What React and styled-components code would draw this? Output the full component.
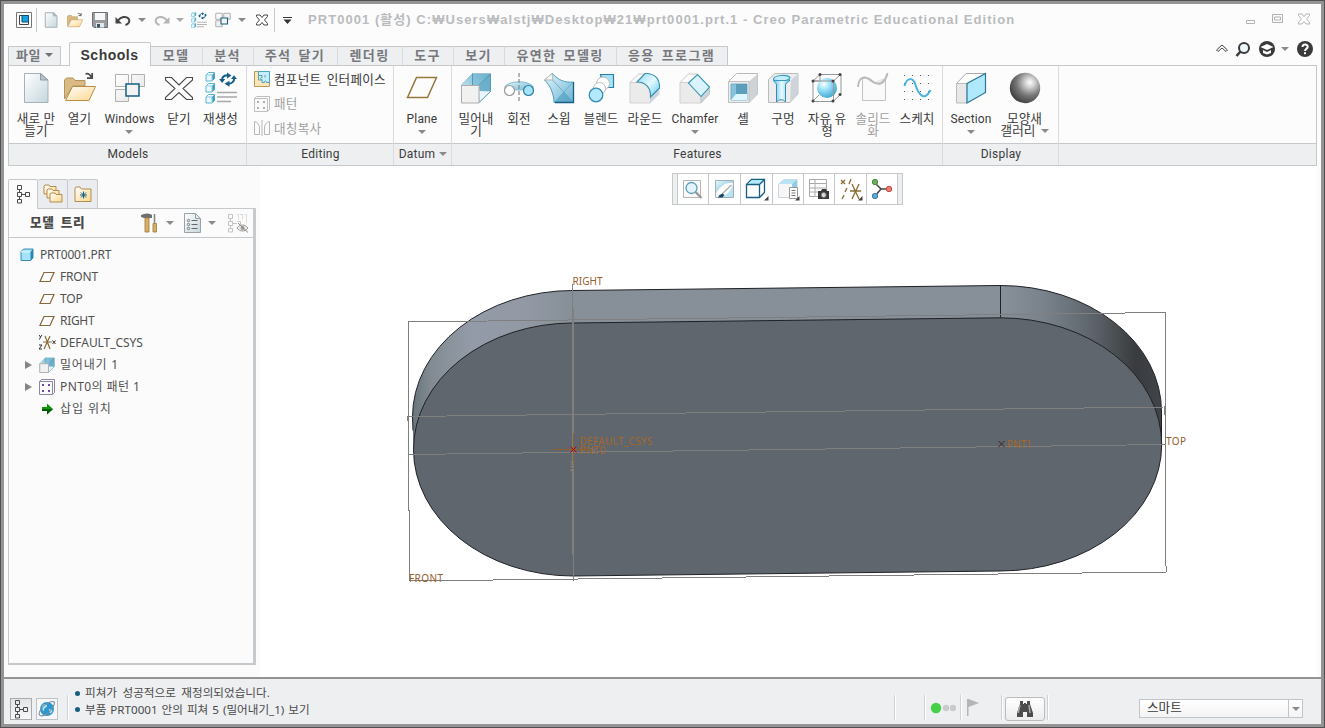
import React from "react";
import styled, { createGlobalStyle } from "styled-components";

const GlobalStyle = createGlobalStyle`
  * { box-sizing: border-box; }
  body { margin: 0; background: #fff; overflow: hidden; }
`;

const uiFont = `Roboto, "Noto Sans CJK KR", sans-serif`;
const treeFont = `"Noto Sans", "Noto Sans CJK KR", sans-serif`;
const line = "#c6c9cc";

/* ---------- window ---------- */
const Window = styled.div`
  width: 1325px;
  height: 728px;
  background: #959494;
  border: 1px solid #525051;
  padding: 3px;
  display: flex;
  flex-direction: column;
  font-family: ${uiFont};
  font-size: 12px;
  color: #3a3a3a;
  white-space: nowrap;
`;
const TitleBar = styled.header`
  height: 38px;
  background: #fcfcfc;
  display: flex;
  align-items: flex-start;
  padding: 4px 11px 0 0;
`;
const Slot = styled.span`
  height: 24px;
  width: ${(p) => p.$w || 16}px;
  margin-left: ${(p) => p.$ml || 0}px;
  display: flex;
  align-items: center;
  justify-content: center;
  flex: none;
`;
const VLine = styled.span`
  width: 1px;
  height: ${(p) => p.$h || 24}px;
  margin-left: ${(p) => p.$ml || 0}px;
  background: #c6c9cc;
  flex: none;
`;
const Title = styled.h1`
  margin: 0 0 0 16px;
  font: 700 13px/23px "Liberation Sans", "Noto Sans CJK KR", sans-serif;
  letter-spacing: 1.05px;
  color: #b9bbbd;
  flex: 1;
`;
const Caret = styled.i`
  width: 0;
  height: 0;
  flex: none;
  border: solid transparent;
  border-width: 4px 4px 0;
  border-top-color: ${(p) => p.$c || "#8a8a8a"};
`;
const WinButtons = styled.div`
  display: flex;
  gap: 11px;
  padding-top: 5px;
`;

/* ---------- ribbon ---------- */
const TabRow = styled.nav`
  height: 23px;
  background: #fcfcfc;
  display: flex;
  align-items: flex-end;
  padding-left: 4px;
  font-family: "Noto Sans CJK KR", sans-serif;
`;
const FileTab = styled.div`
  width: 53px;
  height: 19px;
  margin-right: 8px;
  padding-bottom: 2px;
  background: #edeff1;
  border: 1px solid ${line};
  border-bottom: 0;
  display: flex;
  align-items: center;
  justify-content: center;
  gap: 4px;
  font-weight: 700;
  font-size: 13px;
  letter-spacing: 0.5px;
  line-height: 16px;
  color: #76787c;
`;
const ActiveTab = styled.div`
  width: 82px;
  height: 24px;
  margin-bottom: -1px;
  padding-right: 1px;
  position: relative;
  background: #fcfcfc;
  border: 1px solid ${line};
  border-bottom: 0;
  border-radius: 2px 2px 0 0;
  text-align: center;
  font: 700 14px/25px "Liberation Sans", sans-serif;
  letter-spacing: 0.5px;
  color: #3a3a3a;
`;
const Tab = styled.div`
  width: ${(p) => p.$w}px;
  height: 19px;
  padding-right: 1px;
  background: #edeff1;
  border-top: 1px solid ${line};
  border-right: 1px solid #d8dadc;
  text-align: center;
  font-weight: 700;
  font-size: 13px;
  line-height: 16px;
  letter-spacing: 1.3px;
  word-spacing: 3px;
  color: #76787c;
  &:nth-last-child(2) { border-right-color: ${line}; }
`;
const TabTools = styled.div`
  margin-left: auto;
  display: flex;
  align-items: center;
  height: 20px;
  padding: 0 8px 3px 0;
  margin-bottom: 5px;
`;
const RibbonWrap = styled.div`
  background: #fcfcfc;
  padding: 0 4px 0 4px;
`;
const Ribbon = styled.section`
  height: 101px;
  border: 1px solid ${line};
  display: flex;
`;
const Group = styled.div`
  width: ${(p) => p.$w}px;
  flex: ${(p) => (p.$w ? "none" : 1)};
  display: flex;
  flex-direction: column;
  border-right: ${(p) => (p.$w ? `1px solid #d9dbdd` : 0)};
`;
const GroupBody = styled.div`
  height: 77px;
  display: flex;
`;
const GroupName = styled.div`
  height: 22px;
  background: #edeff1;
  border-top: 1px solid ${line};
  padding: 0 0 2px 1px;
  display: flex;
  gap: 4px;
  align-items: center;
  justify-content: center;
  font-size: 12px;
  letter-spacing: 0.25px;
  color: #3c3c3c;
`;
const Tool = styled.div`
  width: ${(p) => p.$w}px;
  flex: none;
  padding-top: 6px;
  display: flex;
  flex-direction: column;
  align-items: center;
  color: ${(p) => (p.$off ? "#a0a0a0" : "#3a3a3a")};
`;
const ToolText = styled.span`
  margin-top: 9px;
  display: flex;
  flex-direction: column;
  align-items: center;
  font-size: ${(p) => (p.$latin ? 12 : 12.6)}px;
  line-height: 12px;
  letter-spacing: ${(p) => (p.$latin ? 0.15 : 0.1)}px;
  & > i { margin-top: 5px; }
  & > span { display: flex; align-items: center; gap: 5px; }
`;
const EditList = styled.div`
  padding: 1px 0 0 7px;
`;
const EditRow = styled.div`
  height: 24.5px;
  display: flex;
  align-items: center;
  gap: 4px;
  font-size: 12.6px;
  line-height: 16px;
  word-spacing: 2px;
  letter-spacing: 0.25px;
  color: ${(p) => (p.$off ? "#a0a0a0" : "#3a3a3a")};
  & > span { margin-top: 1px; }
`;

/* ---------- work area ---------- */
const Work = styled.main`
  flex: 1;
  display: flex;
  background: #fbfbfb;
  min-height: 0;
`;
const Side = styled.aside`
  width: 256px;
  padding: 13px 4px 12px 4px;
  display: flex;
  flex-direction: column;
`;
const SideTabs = styled.div`
  display: flex;
  height: 29px;
`;
const SideTab = styled.div`
  width: 30px;
  height: ${(p) => (p.$on ? 30 : 29)}px;
  position: relative;
  display: flex;
  align-items: center;
  justify-content: center;
  padding-bottom: ${(p) => (p.$on ? 2 : 0)}px;
  background: ${(p) => (p.$on ? "#fbfbfb" : "#eaecef")};
  border: 1px solid ${line};
  border-bottom: 0;
  border-left-width: ${(p) => (p.$on ? 1 : 0)}px;
  border-radius: 2px 2px 0 0;
`;
const Tree = styled.div`
  flex: 1;
  border: 1px solid ${line};
  border-right: 3px solid #c6cacd;
  border-bottom: 2px solid #c6cacd;
`;
const TreeHead = styled.div`
  height: 29px;
  border-bottom: 1px solid ${line};
  display: flex;
  align-items: center;
  padding-left: 21px;
  font: 700 12.6px/24px "Noto Sans CJK KR", sans-serif;
  color: #4a4a4a;
  & > b {
    width: 109px;
    margin-top: -3px;
    letter-spacing: 0.6px;
    word-spacing: 3px;
  }
`;
const TreeRows = styled.div`
  padding-top: 6px;
  font-family: ${treeFont};
`;
const TreeRow = styled.div`
  height: 22px;
  display: flex;
  align-items: center;
  padding: 0 0 1px ${(p) => (p.$root ? 11 : 16)}px;
  gap: ${(p) => (p.$root ? 6 : 0)}px;
  font-size: 12px;
  line-height: 20px;
  letter-spacing: ${(p) => p.$ls || 0}px;
  color: #505050;
  & > svg { margin-right: ${(p) => (p.$root ? 0 : p.$mr || 5)}px; flex: none; }
`;
const Expander = styled.i`
  width: 14px;
  flex: none;
  &::before {
    content: "";
    display: block;
    width: 0;
    border: solid transparent;
    border-width: 4.5px 0 4.5px 7px;
    border-left-color: ${(p) => (p.$show ? "#858585" : "transparent")};
  }
`;
const Canvas = styled.div`
  width: 1057px;
  background: #fff;
  position: relative;
  & > svg { display: block; }
`;
const ViewBar = styled.div`
  position: absolute;
  left: 412px;
  top: 7px;
  height: 32px;
  display: flex;
  border: 1px solid ${line};
  background: #fff;
`;
const Grip = styled.span`
  width: 4px;
  background: #edeff1;
`;
const ViewCell = styled.span`
  width: ${(p) => p.$w}px;
  display: flex;
  align-items: center;
  justify-content: center;
  border-left: 1px solid ${line};
  &:nth-last-child(2) { border-right: 1px solid ${line}; }
`;

/* ---------- status ---------- */
const Status = styled.footer`
  height: 47px;
  background: #edeff1;
  border-top: 2px solid #959494;
  display: flex;
  align-items: flex-start;
  padding-left: 6px;
`;
const StatusButton = styled.span`
  width: 22px;
  height: 22px;
  margin: 19px 4px 0 0;
  display: flex;
  align-items: center;
  justify-content: center;
  background: ${(p) => (p.$on ? "linear-gradient(#e2e4e7,#f8f8f8)" : "#f6f7f8")};
  border: 1px solid ${(p) => (p.$on ? "#a9acaf" : "#c0c3c6")};
`;
const Messages = styled.ul`
  list-style: none;
  margin: 6px 0 0 6px;
  padding: 0;
  width: 819px;
  font-family: ${treeFont};
  font-size: 11.6px;
  line-height: 16.5px;
  color: #4a4a4a;
`;
const Message = styled.li`
  display: flex;
  align-items: center;
  gap: 5px;
  letter-spacing: 0;
  word-spacing: ${(p) => p.$ws}px;
  &::before {
    content: "";
    width: 5px;
    height: 5px;
    border-radius: 3px;
    background: #156082;
  }
`;
const StatusRule = styled.span`
  width: 2px;
  height: 25px;
  margin: 16px 0 0 ${(p) => p.$ml || 0}px;
  background: linear-gradient(90deg, #cfd2d5 50%, #fff 50%);
  flex: none;
`;
const StatusIcon = styled.span`
  width: ${(p) => p.$w}px;
  height: 25px;
  margin-top: 16px;
  display: flex;
  align-items: center;
  padding-left: ${(p) => p.$pl}px;
`;
const FindButton = styled.span`
  width: 40px;
  height: 24px;
  margin: 18px 0 0 2px;
  border: 1px solid #bbb;
  border-radius: 3px;
  background: linear-gradient(#fff, #ececec);
  display: flex;
  align-items: center;
  justify-content: center;
`;
const Select = styled.div`
  width: 164px;
  height: 19px;
  margin: 20px 0 0 90px;
  border: 1px solid #c2c5c8;
  background: linear-gradient(#fff, #f4f4f4);
  display: flex;
  font-size: 12.6px;
  line-height: 16px;
  padding-left: 7px;
  color: #3a3a3a;
`;
const SelectArrow = styled.span`
  margin-left: auto;
  width: 14px;
  border-left: 1px solid #c2c5c8;
  display: flex;
  align-items: center;
  justify-content: center;
`;

/* ---------- icons ---------- */
const Svg = ({ s = 32, w, h, v, children }) => (
  <svg width={w || s} height={h || s} viewBox={v || "0 0 32 32"} fill="none">{children}</svg>
);

const Defs = () => (
  <svg width="0" height="0" style={{ display: "block" }}>
    <defs>
      <linearGradient id="paper" x1="0" y1="0" x2="1" y2="1"><stop stopColor="#fff" /><stop offset="1" stopColor="#c5d6de" /></linearGradient>
      <linearGradient id="fold" x1="0" y1="0" x2="1" y2="1"><stop stopColor="#fff" /><stop offset="1" stopColor="#fcd78a" /></linearGradient>
      <linearGradient id="sky" x1="0" y1="0" x2="1" y2="1"><stop stopColor="#e3f6fd" /><stop offset="1" stopColor="#6bb3d2" /></linearGradient>
      <linearGradient id="arch" x1="0" y1="0" x2="1" y2="1"><stop stopColor="#8fdcfa" /><stop offset=".5" stopColor="#e3f8ff" /><stop offset="1" stopColor="#5fcdf6" /></linearGradient>
      <linearGradient id="skyr" x1="0" y1="1" x2="1" y2="0"><stop stopColor="#dff5fd" /><stop offset="1" stopColor="#62abc9" /></linearGradient>
      <linearGradient id="tile" x1="0" y1="0" x2="1" y2="1"><stop stopColor="#fff" /><stop offset="1" stopColor="#e2e2e2" /></linearGradient>
      <linearGradient id="tube" x1="0" x2="1"><stop stopColor="#5cc3ee" /><stop offset=".5" stopColor="#e8faff" /><stop offset="1" stopColor="#6fcaf0" /></linearGradient>
      <radialGradient id="ball" cx=".35" cy=".3" r=".75"><stop stopColor="#fff" /><stop offset=".4" stopColor="#9be0f8" /><stop offset="1" stopColor="#3ba6cf" /></radialGradient>
      <radialGradient id="dark" cx=".66" cy=".32" r=".72"><stop stopColor="#fff" /><stop offset=".2" stopColor="#d6d6d6" /><stop offset=".6" stopColor="#787878" /><stop offset="1" stopColor="#414141" /></radialGradient>
    </defs>
  </svg>
);

const NewDoc = ({ s }) => (
  <Svg s={s}><path d="M4.500 1.500H21L28 8.500V30.500H4.500Z" fill="url(#paper)" stroke="#a8b1b5" strokeWidth={s === 16 ? 2 : 1} /><path d="M20.500 1.500V8H28Z" fill="#b5c4cc" stroke="#8f9ca3" /></Svg>
);
const Open = ({ s }) => (
  <Svg s={s}>
    <path d="M.5 27V8L2.500 6H9L11 8.500H21V14H9Z" fill="#d8ba82" stroke="#b3935a" />
    <path d="M1.500 28.500 8.500 14.500H31.500L25 28.500Z" fill="url(#fold)" stroke="#b98d47" />
    <path d="M21.500 2C24.500 1 26.500 3 27 5M23 6.200H28.200V1" stroke="#4a4a4a" strokeWidth="1.700" />
  </Svg>
);
const Save = () => (
  <Svg s={16} v="0 0 16 16"><path d="M.5.5h15v15H2l-1.500-1.500Z" fill="#989c9f" stroke="#6d7174" /><path d="M3 1h10v7H3Z" fill="#f5f7f8" /><path d="M4 11h8v4.500H4Z" fill="#e3e7ea" /><path d="M5 12h3v3.500H5Z" fill="#3c5565" /></Svg>
);
const Undo = ({ c = "#454545", flip }) => (
  <Svg s={16} v="0 0 16 16"><g transform={flip ? "matrix(-1 0 0 1 16 0)" : undefined}><path d="M3 8.500C6 4.500 11 4 13.500 6.500c2 3 0 5.500-3 6.500" stroke={c} strokeWidth="2" /><path d="M.5 5v6.500h6.500Z" fill={c} /></g></Svg>
);
const miniCube = (x, y) => (
  <g key={y}><path d={`M${x} ${y + 2.500}l2.500-2.500h6v6l-2.500 2.500h-6Z`} fill="#e8f8fe" stroke="#5fb3d2" /><path d={`M${x + 6} ${y + 2.500}l2.500-2.500v6l-2.500 2.500Z`} fill="#3f97bb" /><path d={`M${x} ${y + 2.500}h6v6`} stroke="#8fd0e8" /></g>
);
const Regen = ({ s }) => (
  <Svg s={s}>
    {[0.5, 11.500, 22.500].map((y) => miniCube(1, y))}
    <path d="M17 8c0-3.500 3-4.800 6-4.800M29 6c.5 3.500-2 5.500-5.500 5.800" stroke="#156082" strokeWidth="2" />
    <path d="M22 .5l4.500 3-4.500 3ZM24.500 8.800v6l-5-3ZM14 7h6.200l-3 4ZM26 7h6L29 3.200Z" fill="#156082" />
    <path d="M12 20.500h20M12 25h20M12 29.500h14" stroke="#a8a8a8" strokeWidth="1.700" />
  </Svg>
);
const Windows = ({ s }) => (
  <Svg s={s}>
    <path d="M1.500 2.500h13v12h-13ZM17.500 2.500h13v12h-13ZM1.500 17.500h13v12h-13Z" fill="url(#tile)" stroke="#b0b0b0" strokeWidth={s === 16 ? 2 : 1} />
    <path d="M12 12h13v12H12Z" fill="#f3f3f3" stroke="#156082" strokeWidth={s === 16 ? 2.200 : 1.500} />
  </Svg>
);
const Cross = ({ s, c = "#4a4a4a", sw = 1.100 }) => (
  <Svg s={s}><path d="M2.500 5.500H8.500l7.500 7.500L23.500 5.500h6V8L20 16.500l9.500 9V27.500h-6L16 20.500 8.500 27.500h-6V25.500L12 16.500 2.500 8Z" fill="#fff" stroke={c} strokeWidth={sw} /></Svg>
);
const CrossMini = ({ c }) => (
  <Svg s={12} v="0 0 12 12"><path d="M.5 1H4l2 2.500L8 1h3.500v1.500L8.500 6l3 3.500V11H8L6 8.500 4 11H.5V9.500l3-3.500-3-3.500Z" stroke={c} /></Svg>
);
const AppIcon = () => (
  <Svg s={16} v="0 0 16 16"><path d="M.5.5h15v15H.5Z" fill="#fff" stroke="#777" /><path d="M3.500 3.500h9v9h-9Z" fill="#f5f5f5" stroke="#444" /><path d="M6 3.500h6.500V10H6Z" fill="#17a0e0" stroke="#0b4d75" /></Svg>
);
const CompIcon = () => (
  <Svg s={16} v="0 0 16 16"><path d="M.5.5h15v15H.5Z" fill="#fce6b6" stroke="#b8985c" /><path d="M4.500.5h11v11h-3c.5-2-2.500-2-2 0H8V8.500C6 9 6 6 8 6.500V4.500H4.500Z" fill="#c8ecfa" stroke="#4ba3c7" /><path d="M4.500 1v8h3M11 4v2.500" stroke="#4ba3c7" /></Svg>
);
const PatternIcon = ({ c = "#c0c0c0", d = "#b0b0b0" }) => (
  <Svg s={16} v="0 0 16 16"><path d="M.5 2.500h13v13H.5Z" fill="#fafafa" stroke={c} /><path d="M.5 2.500l2-2h13v13l-2 2" stroke={c} /><path d="M3 5h2v2H3ZM9 5h2v2H9ZM3 11h2v2H3ZM9 11h2v2H9Z" fill={d} /></Svg>
);
const MirrorIcon = () => (
  <Svg s={16} v="0 0 16 16"><path d="M.5 1.500v13h5V7C5 4 3 2 .5 1.500ZM15.500 1.500v13h-5V7c.5-3 2.500-5 5-5.500ZM8 0v16" stroke="#b8b8b8" /></Svg>
);
const Plane = () => (
  <Svg><path d="M10.500 5.500H30.500L21.500 25.500H1.500Z" stroke="#96773a" strokeWidth="1.500" /></Svg>
);
const Extrude = ({ s }) => (
  <Svg s={s}>
    <path d="M1.500 13 12.500 1.500h18V19L19 30.500H1.500Z" fill="url(#skyr)" stroke="#9cc3d3" />
    <path d="M12.500 2H30V19H12.500Z" fill="#76b8d4" opacity=".45" />
    <path d="M20 13 30 2.500V19H20Z" fill="#5fa6c4" opacity=".6" />
    <path d="M20 30 30 19.500 19 19Z" fill="#e9f7fc" />
    <path d="M12.500 1.500V13M30.500 2 19 13M30.500 2V19.500L19 30.500" stroke="#4d94b2" strokeWidth=".9" />
    <path d="M1.500 13.500H19V31H1.500Z" fill="#f1f1f1" stroke="#adadad" strokeWidth={s === 16 ? 1.800 : 1} />
  </Svg>
);
const Revolve = () => (
  <Svg><path d="M1.500 15C6 8 26 8 30.500 15L26 19C24 17 20 18 16 18S8 17 6 19Z" fill="url(#sky)" stroke="#8bbcd0" /><circle cx="6.500" cy="18.500" r="5" fill="#fff" stroke="#999" strokeWidth="1.200" /><circle cx="25.500" cy="18.500" r="5" fill="#a6e4fb" stroke="#2a7fa3" strokeWidth="1.200" /><path d="M16 1V31" stroke="#909090" strokeWidth="1.300" strokeDasharray="4 2" /></Svg>
);
const Sweep = () => (
  <Svg><path d="M1.500 8 9.500 1.500C15 8 22 11 30.500 10V30.500H11C11 22 7 13 1.500 8Z" fill="url(#sky)" stroke="#4b9ec0" /><path d="M9.500 8 30 30M29 11 12 30" stroke="#5aa8c8" strokeWidth=".8" /><path d="M21 20 30 30H12Z" fill="#4d9dbf" opacity=".6" /><path d="M1.500 8 9 1.500 10 8Z" fill="#f7f7f7" stroke="#b5b5b5" /><path d="M12 30.500h18.500V10" stroke="#156082" strokeWidth="1.300" /></Svg>
);
const Blend = () => (
  <Svg><path d="M15.500 2.500h13v13h-10Z" fill="#a5e3fa" stroke="#2a7fa3" strokeWidth="1.200" /><circle cx="18" cy="11.500" r="6.500" fill="#fff" stroke="#bbb" /><circle cx="14.500" cy="16.500" r="6" fill="#fff" stroke="#bbb" /><circle cx="11" cy="23" r="6.800" fill="#b2e9fd" stroke="#3a8cae" strokeWidth="1.300" /></Svg>
);
const Round = () => (
  <Svg><path d="M1 10.500H9C17 11 21.500 16 21.500 24V31H1Z" fill="#ebebeb" stroke="#d2d2d2" /><path d="M21.500 25 30.500 15v7l-9 9Z" fill="#ccd4dc" /><path d="M1 10.500 9.500 2H16" stroke="#c8c8c8" /><path d="M8 10 16 1.500C25 1 31 6 30.500 16L21.500 25C22 16 17 10 8 10Z" fill="url(#arch)" stroke="#3a8cae" strokeWidth="1.100" /></Svg>
);
const Chamfer = () => (
  <Svg><path d="M1 10.500H9.500L22 24V31H1Z" fill="#ebebeb" stroke="#d2d2d2" /><path d="M22 24.500 30.500 15.500v6.500l-8.500 9Z" fill="#ccd4dc" stroke="#c0c6cc" /><path d="M1 10.500 9.500 2h9" stroke="#c8c8c8" /><path d="M9.500 11 18.500 2.500 30.500 15 22 24.500Z" fill="#d9f4fd" stroke="#3a93b5" strokeWidth="1.100" /></Svg>
);
const Shell = () => (
  <Svg><path d="M1.500 9.500 9.500 1.500h21V22L22 30.500H1.500Z" fill="#fafafa" stroke="#b8b8b8" /><path d="M22 9.500 30.500 2V22L22 30.500Z" fill="#cfd3d6" /><path d="M1.500 9.500H22v21H1.500Z" fill="#ececec" stroke="#c0c0c0" /><path d="M4 12h16v16H4Z" fill="#86c3dc" stroke="#5aa8c8" strokeWidth=".8" /><path d="M4 28l5-6h11v6Z" fill="#def6ff" /><path d="M9 12h11v10H9Z" fill="#4f93b0" opacity=".75" /></Svg>
);
const Hole = () => (
  <Svg><path d="M1.500 7.500 8 1.500h23V22L23 30.500H1.500Z" fill="#ededed" stroke="#bbb" /><path d="M24 8 31 2V22l-8 8.500Z" fill="#cdd4da" /><path d="M6.500 7C7 12 9.500 10 9.500 13V30c2-3 7-3 9 0V13c0-3 3-2 4.500-5Z" fill="url(#tube)" stroke="#3a8cae" /><path d="M6.500 8C6 3 20 2 23 5.500c-1 3-3 2-4 3H10C9 8 8 9 6.500 8Z" fill="#c3eefc" stroke="#3a9cc0" strokeWidth="1.100" /></Svg>
);
const Free = () => (
  <Svg><path d="M2 9h20.500v20.500H2ZM9 2.500h21v20M9 2.500v6M2 9l7-6.500M22.500 9l7-6.500M22.500 29l7-6.500M2 29l6-6" stroke="#959595" /><circle cx="16" cy="16" r="10" fill="url(#ball)" /><path d="M2 9H22.500V29" stroke="#999" />{[[2, 9], [22, 9], [2, 29], [22, 29], [9, 2.500], [29, 2.500], [29, 22.500]].map(([x, y]) => <circle key={x + "-" + y} cx={x} cy={y} r="1.500" fill="#444" />)}</Svg>
);
const Solidify = () => (
  <Svg><path d="M5.500 7V28.500h23V7C24 8 24 12 18 11S10 4 5.500 7Z" fill="#fafafa" stroke="#c3c3c3" /><path d="M17 11 28.500 6V3" stroke="#ddd" /><path d="M1 15C2 3 9 4 15 9s13 4 15.500-8" stroke="#b8b8b8" strokeWidth="1.800" /></Svg>
);
const Sketch = () => (
  <Svg>{[3, 11, 19, 27].map((y) => [3, 11, 19, 27].map((x) => <rect key={x + "-" + y} x={x} y={y} width="1" height="1" fill="#555" />))}<path d="M3.500 14C6 5 12 5 14.500 13S23 31 29.500 18" stroke="#46b4de" strokeWidth="2" /></Svg>
);
const Section = () => (
  <Svg><path d="M1.500 11.500 11 1.500H31L12 11.500Z" fill="#fff" stroke="#aaa" /><path d="M1.500 11.500H12V31H1.500Z" fill="#e8e8e8" stroke="#bbb" /><path d="M12 11.500 30.500 1.500V20.500L12 31Z" fill="#aee9fd" stroke="#2c7797" strokeWidth="1.200" /></Svg>
);
const Sphere = () => <Svg><circle cx="16" cy="16" r="15.200" fill="url(#dark)" /></Svg>;

const TreeGlyph = () => (
  <Svg w={14} h={20} v="0 0 14 20"><path d="M1.500 1.500h4v4h-4ZM1.500 8.500h4v4h-4ZM1.500 15.500h4v3.500h-4ZM9.500 8.500h4v4h-4ZM3.500 5.500v3M3.500 12.500v3M5.500 10.500h4" stroke="#4a4a4a" /></Svg>
);
const folder = (x, y) => <path key={x} d={`M${x} ${y + 9}V${y + 1}l1-1h4l1 1.500h6V${y + 9}Z`} fill="url(#fold)" stroke="#b08d50" />;
const Folders = () => <Svg s={20} v="0 0 20 20">{folder(1, 1)}{folder(4, 5)}{folder(7, 9)}</Svg>;
const FavFolder = () => (
  <Svg w={18} h={16} v="0 0 18 16"><path d="M1 15.500V2l1-1h4l1.500 2H17v12.500Z" fill="url(#fold)" stroke="#b08d50" /><path d="M9.500 5.500v7M6 9h7M7 6.500l5 5M12 6.500l-5 5" stroke="#156082" /></Svg>
);
const Hammer = () => (
  <Svg w={18} h={20} v="0 0 18 20"><path d="M1 2C5 0 9 0 12 2V5H4L1 4Z" fill="#707070" /><path d="M5 5h4v14H5Z" fill="#d9ae66" stroke="#9c763c" strokeWidth=".8" /><path d="M14.500 1v9" stroke="#888" strokeWidth="1.600" /><path d="M13 10.500h3.500V19H13Z" fill="#d9ae66" stroke="#9c763c" strokeWidth=".8" /></Svg>
);
const ListDoc = () => (
  <Svg w={17} h={20} v="0 0 17 20"><path d="M.5.5h11l5 5v14H.5Z" fill="url(#paper)" stroke="#98a2a8" /><path d="M11.500.5v5h5" stroke="#98a2a8" />{[7.500, 11.500, 15.500].map((y) => <g key={y}><circle cx="4.500" cy={y} r="1.200" stroke="#666" strokeWidth=".8" /><path d={`M7.500 ${y}h6`} stroke="#666" /></g>)}</Svg>
);
const HiddenTree = () => (
  <Svg w={21} h={20} v="0 0 21 20"><path d="M.5 1.500h4v4h-4ZM.5 8.500h4v4h-4ZM.5 15.500h4v3.500h-4ZM2.500 5.500v3M2.500 12.500v3M4.500 10.500H9M9.500 8.500h3v3" stroke="#c4c4c4" /><path d="M8.500 1.500h2v5M14.500 6.500v-5h-3M16.500 1.500h2v9" stroke="#dcdcdc" /><path d="M9 15c3-4 8-4 11 0-3 4-8 4-11 0Z" fill="#eee" stroke="#999" /><circle cx="14.500" cy="15" r="2" fill="#999" /><path d="M10 10l10 9.500" stroke="#888" /></Svg>
);
const PartIcon = () => (
  <Svg w={14} h={14} v="0 0 14 14"><path d="M1 3.500 3.500 1H13v8.500L10.500 12.500H1Z" fill="#a3e3fb" stroke="#3a8cae" /><path d="M10.500 4 13 1v9l-2.500 3Z" fill="#2a86ac" /><path d="M1 3.800h9" stroke="#e8faff" /></Svg>
);
const PlaneMini = () => <Svg s={16} v="0 0 16 16"><path d="M5 3.500h10L11 12.500H1Z" stroke="#86683a" strokeWidth="1.200" /></Svg>;
const Csys = () => (
  <Svg w={17} h={17} v="0 0 17 17"><path d="M4 8h9M6 2l5 13M11 2 5 15" stroke="#8a6c38" strokeWidth="1.200" /><path d="M0 1l1.500 2L3 1M1.500 3 .5 5.500M0 11h3l-3 4h3M13.500 6.500l3 3.500M16.500 6.500l-3 3.500" stroke="#333" strokeWidth="1" /></Svg>
);
const Insert = () => <Svg s={16} v="0 0 16 16"><path d="M3 6h5V2.500L14 8l-6 5.500V10H3Z" fill="#0a9a0a" /><path d="M3 8h11l-6 5.500V10H3Z" fill="#065c06" /></Svg>;

const ZoomIc = () => <Svg s={22} v="0 0 22 22"><path d="M1.500 2.500h17v17h-17Z" fill="#fafafa" stroke="#b5b5b5" /><circle cx="9.500" cy="10" r="5.500" fill="#e3f4fb" stroke="#5a9cb8" strokeWidth="1.300" /><path d="m13.500 14 6 6" stroke="#999" strokeWidth="2.400" /></Svg>;
const Repaint = () => <Svg s={22} v="0 0 22 22"><path d="M1.500 2.500h18v17h-18Z" fill="#fff" stroke="#a5aeb3" /><path d="M2 3h17v2C12 4 5 9 2 16Z" fill="url(#sky)" /><path d="M8 19C13 17 17 12 19 6v13Z" fill="#b9e4f3" /><path d="M8 16 17.500 7" stroke="#aaa" strokeWidth="1.200" /><path d="m4 19.500 1.500-2.500 3-1.500 2 1.500-2 2.500Z" fill="#154a66" /></Svg>;
const Corner = () => <path d="M23.500 19v4.500H19Z" fill="#444" />;
const BoxIc = () => <Svg s={24} v="0 0 24 24"><path d="M2.500 7.500 7.500 2.500h13v13l-5 5h-13Z" transform="translate(-1)" fill="#fff" stroke="#156082" strokeWidth="1.300" /><path d="M2.500 7 7 3h12l-4.500 4Z" fill="#b5e9fb" /><path d="M1.500 7.500h13v13M14.500 7.500l5-5" stroke="#156082" strokeWidth="1.300" /><Corner /></Svg>;
const SavedView = () => <Svg s={24} v="0 0 24 24"><path d="M2.500 7 8 2.500h13v14l-5 4H2.500Z" fill="#f7f7f7" stroke="#ccd6dc" /><path d="M2.500 7 8 2.500h13L16 7Z" fill="#b9e4f3" /><path d="M16 7l5-4.500v12l-5 5Z" fill="#8fcbe2" /><path d="M13.500 10.500h8v11h-8Z" fill="#fff" stroke="#999" /><path d="M15.500 13.500h4M15.500 16h4M15.500 18.500h4" stroke="#777" /><Corner /></Svg>;
const Camera = () => <Svg s={22} v="0 0 22 22"><path d="M1.500 1.500h17v17h-17ZM1.500 5.500h17M1.500 10h17M1.500 14h17M7 1.500v17" fill="#fff" stroke="#aaa" /><path d="M10 13h3l1-2h4l1 2h2v8H10Z" fill="#3a3a3a" /><circle cx="15.700" cy="17" r="2.500" fill="#ddd" stroke="#777" /></Svg>;
const DatumIc = () => <Svg s={24} v="0 0 24 24"><path d="m2 3 4 4M6 3 2 7M12 2l-2 5M8 11l-2 4M5 18l-2 4M11 14h11M13 7l7 15M20 7l-7 15" stroke="#8a6c30" strokeWidth="1.300" /><Corner /></Svg>;
const Spin = () => <Svg s={22} v="0 0 22 22"><path d="M4 5l6 6h8M10 11l-6 7" stroke="#444" strokeWidth="1.500" /><circle cx="4" cy="4" r="2.700" fill="#6cae5c" stroke="#4c8c46" /><circle cx="18" cy="11" r="2.700" fill="#ef7b70" stroke="#c74a44" /><circle cx="4" cy="18" r="2.700" fill="#62a8cf" stroke="#3b7ea6" /></Svg>;
const Globe = () => <Svg s={18} v="0 0 18 18"><circle cx="9" cy="9" r="7" fill="#2b98cf" /><path d="M4 6c3-3 5-2 5 0s-3 1-3 4-2 0-2-4ZM11 9c3 0 4 1 3 3s-3 2-3-3Z" fill="#aee0f2" /><path d="M2 15.500C-1 13 5 5 11 2.500s6.500 0 4 4.500S6 17.500 2 15.500Z" stroke="#7d8d97" strokeWidth="1.100" /></Svg>;
const Binoc = () => <Svg w={18} h={16} v="0 0 18 16"><path d="M4 0h3v3h1V2h2v1h1V0h3v3l3 9v4h-6v-5H7v5H1v-4L4 3Z" fill="#4c4c4c" /><path d="M4 4 2 12M13 4l1 8" stroke="#aaa" strokeWidth="1.500" /></Svg>;

/* ---------- model ---------- */
const Model = () => (
  <svg width="1057" height="511" viewBox="260 166 1057 511" fill="none">
    <defs>
      <linearGradient id="rim" gradientUnits="userSpaceOnUse" x1="412" y1="0" x2="1162" y2="0">
        <stop offset="0" stopColor="#68737a" /><stop offset=".025" stopColor="#828b92" /><stop offset=".08" stopColor="#949ba8" />
        <stop offset=".15" stopColor="#9299a5" /><stop offset=".21" stopColor="#879098" /><stop offset=".79" stopColor="#879098" />
        <stop offset=".84" stopColor="#7a828c" /><stop offset=".88" stopColor="#697279" /><stop offset=".915" stopColor="#5a5f67" />
        <stop offset=".94" stopColor="#484d4f" /><stop offset=".965" stopColor="#393b3f" /><stop offset="1" stopColor="#414549" />
      </linearGradient>
    </defs>
    <path d="M413.500 450L412.500 417A160.500 126.500 0 0 1 573 290.500L1000 285.500A161 126 0 0 1 1161.500 412V444Z" fill="url(#rim)" />
    <path d="M413 430.500L412.500 417A160.500 126.500 0 0 1 573 290.500L1000 285.500A161 126 0 0 1 1161.500 412V440M1000.500 285.500V317.500" stroke="#1f2125" />
    <path d="M573 323L1000 317.800A161.500 126.500 0 0 1 1161.700 444.500A161.500 126.500 0 0 1 1000 571L573 576A159.500 126.500 0 0 1 573 323Z" fill="#5f666e" stroke="#1f2125" />
    <g stroke="#7f7f7f" shapeRendering="crispEdges">
      <path d="M408.500 322L1165.500 312.500V560L1166.500 572L410 581L409.500 510H408.500Z" />
      <path d="M407.500 421V416.500L1164.500 407V415M409 454.500L1165 444.500M573.500 309V581M572.500 284V555" />
    </g>
    <path d="M553 449.500h35M573.500 433v36" stroke="#8f5e2b" />
    <path d="m570.500 446.500 6 6M576.500 446.500l-6 6" stroke="#c00000" />
    <path d="m998.500 441 6 6M1004.500 441l-6 6" stroke="#3d2226" />
    <path d="m570.500 461 3.500 4M574 461l-3.500 4M570.500 466.500h3.500l-3.500 4h3.500M591 448l5 5M596 448l-5 5" stroke="#83807c" />
    <g fill="#96602c" fontFamily='"Noto Sans", sans-serif' fontSize="10">
      <text x="572.500" y="285" textLength="30">RIGHT</text>
      <text x="1166" y="445" textLength="20">TOP</text>
      <text x="409" y="582" textLength="34">FRONT</text>
      <g fill="#a5672a">
        <text x="579.500" y="445" textLength="73">DEFAULT_CSYS</text>
        <text x="579.500" y="453.500" textLength="26">PNT0</text>
        <text x="1007" y="447.500" textLength="25">PNT1</text>
      </g>
    </g>
  </svg>
);

/* ---------- data ---------- */
const tabs = [["모델", 52], ["분석", 51], ["주석 달기", 84], ["렌더링", 65], ["도구", 51], ["보기", 51], ["유연한 모델링", 112], ["응용 프로그램", 111]];
const models = [
  { w: 54, icon: <NewDoc />, text: ["새로 만", "들기"] },
  { w: 33, icon: <Open />, text: ["열기"] },
  { w: 67, icon: <Windows />, text: ["Windows"], latin: true, menu: true },
  { w: 32, icon: <Cross />, text: ["닫기"] },
  { w: 51, icon: <Regen />, text: ["재생성"] },
];
const features = [
  { w: 48, icon: <Extrude />, text: ["밀어내", "기"] },
  { w: 38, icon: <Revolve />, text: ["회전"] },
  { w: 42, icon: <Sweep />, text: ["스윕"] },
  { w: 42, icon: <Blend />, text: ["블렌드"] },
  { w: 46, icon: <Round />, text: ["라운드"] },
  { w: 54, icon: <Chamfer />, text: ["Chamfer"], latin: true, menu: true },
  { w: 42, icon: <Shell />, text: ["셸"] },
  { w: 38, icon: <Hole />, text: ["구멍"] },
  { w: 50, icon: <Free />, text: ["자유 유", "형"] },
  { w: 42, icon: <Solidify />, text: ["솔리드", "화"], off: true },
  { w: 46, icon: <Sketch />, text: ["스케치"] },
];
const display = [
  { w: 56, icon: <Section />, text: ["Section"], latin: true, menu: true },
  { w: 51, icon: <Sphere />, text: ["모양새", "갤러리"], inlineMenu: true },
];

const Tools = ({ items }) => (
  <GroupBody>
    {items.map((t) => (
      <Tool key={t.text[0]} $w={t.w} $off={t.off}>
        {t.icon}
        <ToolText $latin={t.latin}>
          {t.text.map((l, i) => <span key={l}>{l}{t.inlineMenu && i === 1 && <Caret />}</span>)}
          {t.menu && <Caret />}
        </ToolText>
      </Tool>
    ))}
  </GroupBody>
);

export default function App() {
  return (
    <Window>
      <GlobalStyle />
      <Defs />
      <TitleBar>
        <Slot $ml={12}><AppIcon /></Slot>
        <VLine $ml={4} />
        <Slot $ml={6}><NewDoc s={16} /></Slot>
        <Slot $ml={8}><Open s={17} /></Slot>
        <Slot $ml={9}><Save /></Slot>
        <Slot $ml={7}><Undo /></Slot>
        <Slot $w={8} $ml={7}><Caret /></Slot>
        <Slot $ml={8}><Undo c="#b5b5b5" flip /></Slot>
        <Slot $w={8} $ml={6}><Caret $c="#aaa" /></Slot>
        <Slot $ml={7}><Regen s={16} /></Slot>
        <Slot $ml={8}><Windows s={16} /></Slot>
        <Slot $w={8} $ml={7}><Caret /></Slot>
        <Slot $w={13} $ml={9}><CrossMini c="#444" /></Slot>
        <VLine $ml={6} />
        <Slot $w={9} $ml={8}>
          <Svg w={9} h={7} v="0 0 9 7"><path d="M0 .5h9" stroke="#333" /><path d="M.5 2.500h8l-4 4.500Z" fill="#333" /></Svg>
        </Slot>
        <Title>PRT0001 (활성) C:₩Users₩alstj₩Desktop₩21₩prt0001.prt.1 - Creo Parametric Educational Edition</Title>
        <WinButtons>
          <Svg w={16} h={12} v="0 0 16 12"><path d="M2.500 7.500h8v3h-8Z" stroke="#b0b3b5" /></Svg>
          <Svg w={16} h={12} v="0 0 16 12"><path d="M1.500 1.500h10v8h-10ZM3.500 4h6v3h-6Z" stroke="#b0b3b5" /></Svg>
          <CrossMini c="#b0b3b5" />
        </WinButtons>
      </TitleBar>
      <TabRow>
        <FileTab>파일<Caret $c="#707276" /></FileTab>
        <ActiveTab>Schools</ActiveTab>
        {tabs.map(([t, w]) => <Tab key={t} $w={w}>{t}</Tab>)}
        <TabTools>
          <Svg w={12} h={9} v="0 0 12 9"><path d="M.5 6 6 1l5.500 5L10 7.500 6 4 2 7.500Z" stroke="#444" /></Svg>
          <Slot $ml={7}><Svg s={16} v="0 0 16 16"><circle cx="9" cy="7" r="5" fill="#eef6fa" stroke="#3a3a3a" strokeWidth="2" /><path d="m5.500 10.500-4 4.500" stroke="#3a3a3a" strokeWidth="2.600" /></Svg></Slot>
          <Slot $ml={8}><Svg s={16} v="0 0 16 16"><circle cx="8" cy="8" r="8" fill="#3a3a3a" /><path d="m1.500 6 6.500-3L14.500 6 8 9ZM4 9l4 2 4-2v3l-4 1.500L4 12Z" fill="#fff" /></Svg></Slot>
          <Slot $w={8} $ml={6}><Caret /></Slot>
          <Slot $ml={8}><Svg s={16} v="0 0 16 16"><circle cx="8" cy="8" r="8" fill="#3a3a3a" /><path d="M5.500 6c0-3.300 5.200-3.200 5.200-.2C10.700 8 8 7.800 8 10" stroke="#fff" strokeWidth="2" /><rect x="7" y="11.200" width="2" height="2" fill="#fff" /></Svg></Slot>
        </TabTools>
      </TabRow>
      <RibbonWrap>
        <Ribbon>
          <Group $w={238}><Tools items={models} /><GroupName>Models</GroupName></Group>
          <Group $w={147}>
            <GroupBody>
              <EditList>
                <EditRow><CompIcon /><span>컴포넌트 인터페이스</span></EditRow>
                <EditRow $off><PatternIcon /><span>패턴</span></EditRow>
                <EditRow $off><MirrorIcon /><span>대칭복사</span></EditRow>
              </EditList>
            </GroupBody>
            <GroupName>Editing</GroupName>
          </Group>
          <Group $w={58}>
            <Tools items={[{ w: 56, icon: <Plane />, text: ["Plane"], latin: true, menu: true }]} />
            <GroupName>Datum<Caret /></GroupName>
          </Group>
          <Group $w={491}><Tools items={features} /><GroupName>Features</GroupName></Group>
          <Group $w={116}><Tools items={display} /><GroupName>Display</GroupName></Group>
          <Group><GroupBody /><GroupName /></Group>
        </Ribbon>
      </RibbonWrap>
      <Work>
        <Side>
          <SideTabs>
            <SideTab $on><TreeGlyph /></SideTab>
            <SideTab><Folders /></SideTab>
            <SideTab><FavFolder /></SideTab>
          </SideTabs>
          <Tree>
            <TreeHead>
              <b>모델 트리</b>
              <Slot $w={20}><Hammer /></Slot>
              <Slot $w={8} $ml={7}><Caret /></Slot>
              <Slot $w={18} $ml={9}><ListDoc /></Slot>
              <Slot $w={8} $ml={7}><Caret /></Slot>
              <Slot $w={22} $ml={11}><HiddenTree /></Slot>
            </TreeHead>
            <TreeRows>
              <TreeRow $root $ls={-0.2}><PartIcon />PRT0001.PRT</TreeRow>
              <TreeRow $ls={-0.2}><Expander /><PlaneMini />FRONT</TreeRow>
              <TreeRow $ls={-0.15}><Expander /><PlaneMini />TOP</TreeRow>
              <TreeRow $ls={-0.3}><Expander /><PlaneMini />RIGHT</TreeRow>
              <TreeRow $ls={-0.05} $mr={4}><Expander /><Csys />DEFAULT_CSYS</TreeRow>
              <TreeRow $ls={0.8}><Expander $show /><Extrude s={16} />밀어내기 1</TreeRow>
              <TreeRow $ls={0.4}><Expander $show /><PatternIcon c="#8f86a6" d="#6d4aa0" />PNT0의 패턴 1</TreeRow>
              <TreeRow $ls={0.9}><Expander /><Insert />삽입 위치</TreeRow>
            </TreeRows>
          </Tree>
        </Side>
        <Canvas>
          <Model />
          <ViewBar>
            <Grip />
            <ViewCell $w={31}><ZoomIc /></ViewCell>
            <ViewCell $w={32}><Repaint /></ViewCell>
            <ViewCell $w={32}><BoxIc /></ViewCell>
            <ViewCell $w={31}><SavedView /></ViewCell>
            <ViewCell $w={31}><Camera /></ViewCell>
            <ViewCell $w={32}><DatumIc /></ViewCell>
            <ViewCell $w={32}><Spin /></ViewCell>
            <Grip />
          </ViewBar>
        </Canvas>
      </Work>
      <Status>
        <StatusButton $on><TreeGlyph /></StatusButton>
        <StatusButton><Globe /></StatusButton>
        <StatusRule $ml={5} />
        <Messages>
          <Message $ws={2.5}>피쳐가 성공적으로 재정의되었습니다.</Message>
          <Message $ws={1}>부품 PRT0001 안의 피쳐 5 (밀어내기_1) 보기</Message>
        </Messages>
        <StatusRule />
        <StatusRule $ml={28} />
        <StatusIcon $w={34} $pl={4}>
          <Svg w={26} h={12} v="0 0 26 12"><circle cx="6" cy="6" r="5.200" fill="#45d04a" /><circle cx="16" cy="6" r="3.200" fill="#c9cbcd" /><circle cx="23" cy="6" r="3.200" fill="#c9cbcd" /></Svg>
        </StatusIcon>
        <StatusRule />
        <StatusIcon $w={39} $pl={5}>
          <Svg w={12} h={17} v="0 0 12 17"><path d="M0 0h1.500v17H0ZM1.500 0 12 4 1.500 8Z" fill="#b3b5b7" /></Svg>
        </StatusIcon>
        <StatusRule />
        <FindButton><Binoc /></FindButton>
        <StatusRule $ml={2} />
        <Select>스마트<SelectArrow><Caret /></SelectArrow></Select>
      </Status>
    </Window>
  );
}
